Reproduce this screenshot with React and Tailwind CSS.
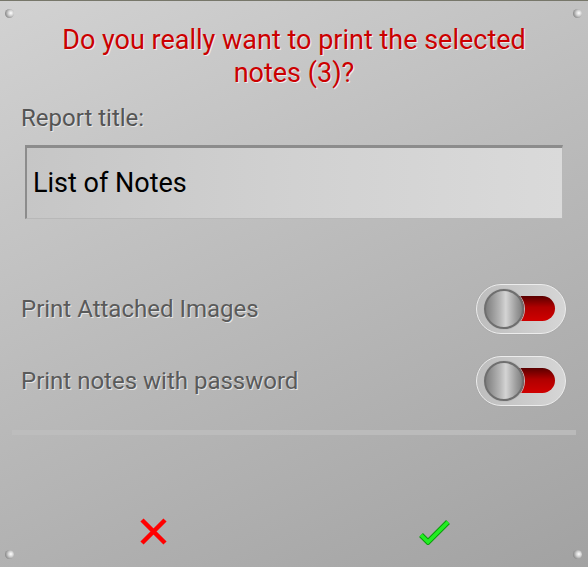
import React from "react";

function Screw({ className }) {
  return (
    <div
      className={`absolute w-[9px] h-[9px] rounded-full bg-[radial-gradient(circle_at_65%_45%,#ffffff_0%,#d0d0d0_35%,#808080_80%)] ${className}`}
    />
  );
}

function Toggle() {
  return (
    <div className="relative w-[90px] h-[50px] rounded-full border border-[#ececec] bg-[linear-gradient(90deg,#bdbdbd,#d6d6d6)] shadow-[0_0_1px_#999]">
      {/* red track */}
      <div className="absolute left-[40px] top-[11px] w-[38px] h-[25px] rounded-r-full bg-[linear-gradient(180deg,#5a0000_0%,#b00000_45%,#d00000_100%)]" />
      {/* knob */}
      <div className="absolute left-[7px] top-[4px] w-[40px] h-[40px] rounded-full border-[2px] border-[#6f6f6f] bg-[linear-gradient(90deg,#7e7e7e_0%,#b8b8b8_40%,#d4d4d4_55%,#9a9a9a_85%,#808080_100%)] shadow-[0_0_0_1px_#bdbdbd]" />
    </div>
  );
}

export default function App() {
  return (
    <div
      className="relative w-[588px] h-[567px] overflow-hidden border-t border-[#77776a] bg-[linear-gradient(155deg,#d2d2d2_0%,#bcbcbc_45%,#a2a2a2_100%)]"
      style={{ fontFamily: "Roboto, 'Liberation Sans', sans-serif" }}
    >
      <Screw className="left-[5px] top-[8px]" />
      <Screw className="right-[6px] top-[8px]" />
      <Screw className="left-[5px] bottom-[8px]" />
      <Screw className="right-[6px] bottom-[8px]" />

      <div className="flex flex-col px-[21px]">
        {/* heading */}
        <h1 className="pt-[23px] text-center text-[27px] leading-[33px] text-[#cc0000] [text-shadow:1px_1px_0_#eeeeee]">
          Do you really want to print the selected
          <br />
          notes (3)?
        </h1>

        <label className="mt-[15px] text-[24px] leading-[26px] text-[#555555] [text-shadow:1px_1px_0_#e6e6e6]">
          Report title:
        </label>

        {/* input */}
        <div className="mt-[14px] ml-[4px] mr-[4px] h-[74px] flex items-center border-t-[3px] border-l-[2px] border-[#8c8c8c] border-r border-b border-r-[#b8b8b8] border-b-[#b8b8b8] bg-[linear-gradient(90deg,#c6c6c6,#d1d1d1_50%,#dadada)] px-[6px]">
          <span className="text-[27px] leading-none text-black">List of Notes</span>
        </div>

        {/* toggles */}
        <div className="mt-[65px] flex flex-col gap-[22px]">
          <div className="flex items-center justify-between mr-[1px]">
            <span className="text-[24px] text-[#5a5a5a] [text-shadow:1px_1px_0_#e6e6e6]">
              Print Attached Images
            </span>
            <Toggle />
          </div>
          <div className="flex items-center justify-between mr-[1px]">
            <span className="text-[24px] text-[#5a5a5a] [text-shadow:1px_1px_0_#e6e6e6]">
              Print notes with password
            </span>
            <Toggle />
          </div>
        </div>

        {/* separator */}
        <div className="mt-[24px] -mx-[9px] h-[5px] bg-[#bebebe] opacity-80" />

        {/* actions */}
        <div className="mt-[83px] flex items-center pl-[119px] gap-[251px]">
          <svg width="27" height="27" viewBox="0 0 27 27">
            <path d="M2 2 L25 25 M25 2 L2 25" stroke="#ff0000" strokeWidth="4.5" />
          </svg>
          <svg width="33" height="27" viewBox="0 0 33 27">
            <path
              d="M3 17 L10 24 L30 4"
              fill="none"
              stroke="#0a9a0a"
              strokeWidth="5.5"
              strokeLinejoin="miter"
            />
            <path
              d="M3 17 L10 24 L30 4"
              fill="none"
              stroke="#22ee22"
              strokeWidth="3.5"
              strokeLinejoin="miter"
            />
          </svg>
        </div>
      </div>
    </div>
  );
}
